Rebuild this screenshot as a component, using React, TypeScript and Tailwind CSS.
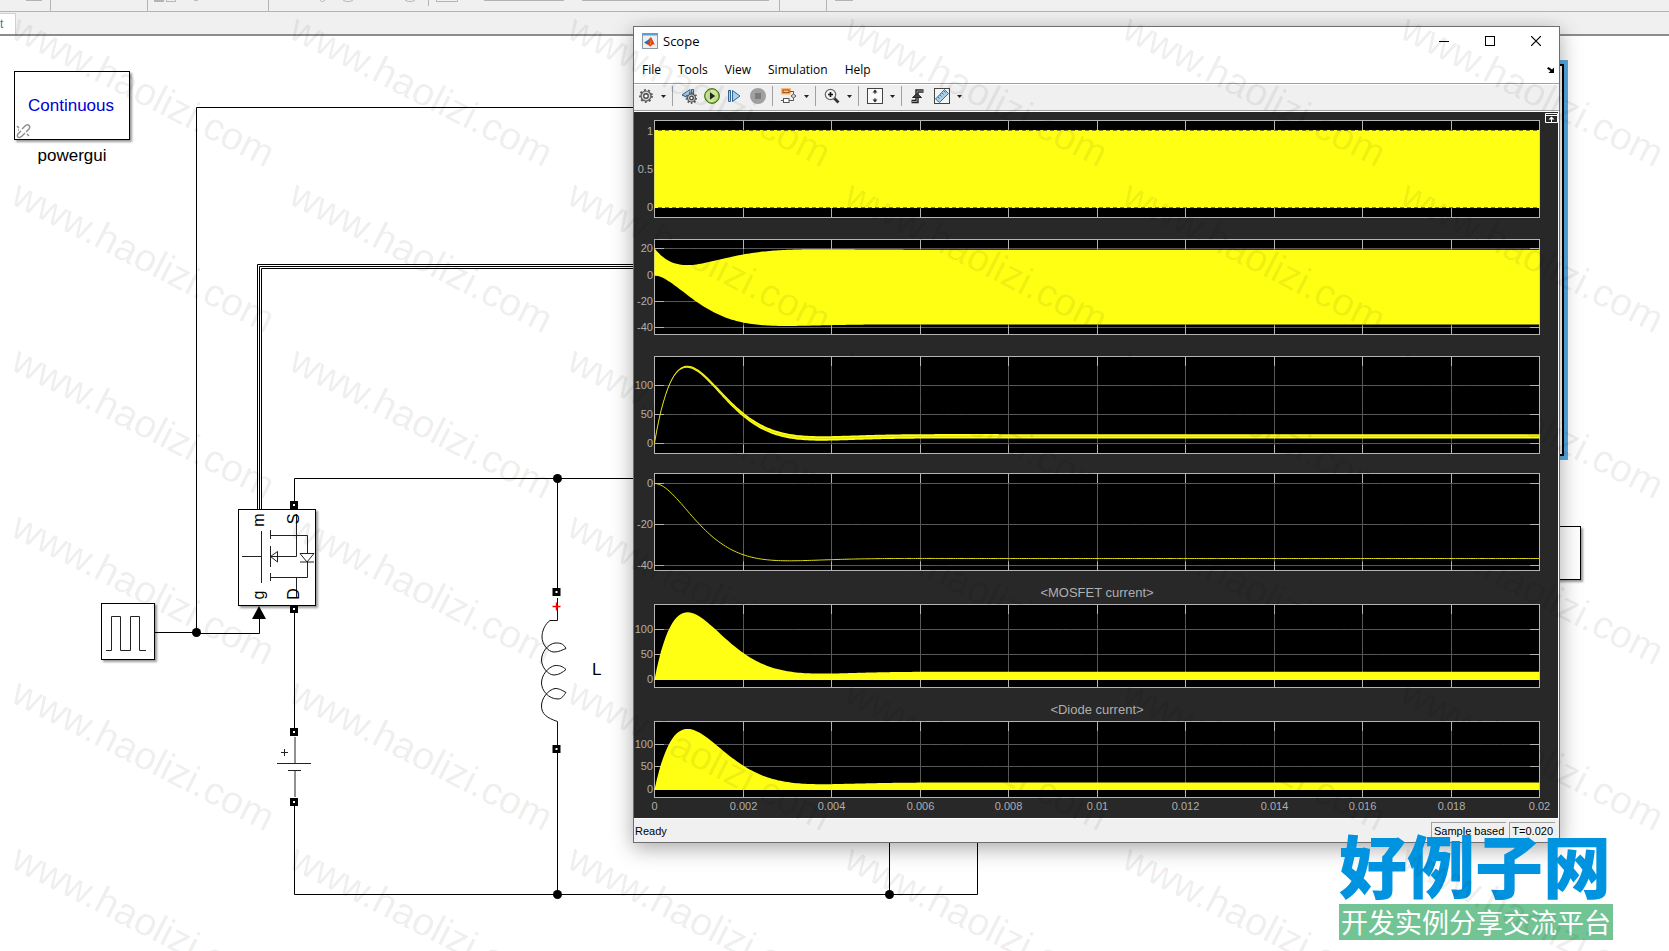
import type { ReactNode } from "react";

type Signal = (t: number) => number;

type Plot = {
  height: number;
  ticks: { y: number; label: string }[];
  // pixel row of value zero and pixels for one unit
  zero: number;
  scale: number;
  fill?: { top: Signal; bottom: Signal };
  line?: Signal;
  dashes?: number[];
  title?: string;
  gap: string;
};

// Step response of the converter, time in milliseconds
const DAMPING = 1.148;
const OMEGA = 1.03;

const settled: Signal = (t) =>
  1 - Math.exp(-DAMPING * t) * (Math.cos(OMEGA * t) + (DAMPING / OMEGA) * Math.sin(OMEGA * t));
const output: Signal = (t) => -36.6 * settled(t);
const inductor: Signal = (t) =>
  11.5 + Math.exp(-DAMPING * t) * (-11.5 * Math.cos(OMEGA * t) + 420 * Math.sin(OMEGA * t));
const ripple: Signal = (t) => 0.6 + 3.2 * settled(t);
const peakCurrent: Signal = (t) => Math.max(0, inductor(t) + 1 + 3.8 * settled(t));
const ground: Signal = () => 0;

const plots: Plot[] = [
  {
    height: 98, zero: 88, scale: 78, gap: "pt-2",
    ticks: [{ y: 11, label: "1" }, { y: 49, label: "0.5" }, { y: 87, label: "0" }],
    fill: { top: () => 1, bottom: ground },
    dashes: [10.5, 87.5],
  },
  {
    height: 96, zero: 36, scale: 1.314, gap: "pt-[21px]",
    ticks: [{ y: 9, label: "20" }, { y: 36, label: "0" }, { y: 62, label: "-20" }, { y: 88, label: "-40" }],
    fill: {
      top: (t) => 20.4 - 0.0975 * inductor(t),
      bottom: (t) => output(t) - 0.012 * inductor(t) - 0.9 * settled(t),
    },
  },
  {
    height: 98, zero: 87, scale: 0.578, gap: "pt-[21px]",
    ticks: [{ y: 29, label: "100" }, { y: 58, label: "50" }, { y: 87, label: "0" }],
    fill: { top: (t) => inductor(t) + ripple(t), bottom: (t) => inductor(t) - ripple(t) },
    line: inductor,
  },
  {
    height: 98, zero: 10.5, scale: 2.05, gap: "pt-[19px]",
    ticks: [{ y: 10, label: "0" }, { y: 51, label: "-20" }, { y: 92, label: "-40" }],
    line: output,
  },
  {
    height: 84, zero: 76, scale: 0.504, gap: "", title: "<MOSFET current>",
    ticks: [{ y: 25, label: "100" }, { y: 50, label: "50" }, { y: 75, label: "0" }],
    fill: { top: peakCurrent, bottom: ground },
  },
  {
    height: 77, zero: 69, scale: 0.455, gap: "", title: "<Diode current>",
    ticks: [{ y: 23, label: "100" }, { y: 45, label: "50" }, { y: 68, label: "0" }],
    fill: { top: peakCurrent, bottom: ground },
  },
];

const timeLabels = ["0", "0.002", "0.004", "0.006", "0.008", "0.01", "0.012", "0.014", "0.016", "0.018", "0.02"];
const gridX = timeLabels.map((_, i) => Math.round(20 + i * 88.5) + 0.5);
const samples = Array.from({ length: 401 }, (_, i) => i * 0.05);

function trace(signal: Signal, { zero, scale }: Plot) {
  return samples.map((t) => `${(20.5 + t * 44.25).toFixed(1)} ${(zero - signal(t) * scale).toFixed(2)}`);
}

function Axes({ plot, last }: { plot: Plot; last: boolean }) {
  const { height } = plot;
  const bottom = height - 0.5;
  return (
    <svg viewBox={`0 0 924 ${last ? height + 20 : height}`} className="block h-auto w-full">
      <rect x="20.5" y="0.5" width="885" height={height - 1} fill="#000" />
      {gridX.slice(1, -1).map((x) => (
        <path key={x} d={`M${x} 1V${bottom}`} stroke="#585858" />
      ))}
      {plot.ticks.map((tick) => (
        <path key={tick.label} d={`M21 ${tick.y + 0.5}H905`} stroke="#585858" />
      ))}
      {gridX.slice(1, -1).map((x) => (
        <path key={x} d={`M${x} 1v9M${x} ${bottom}v-9`} stroke="#b4b4b4" />
      ))}
      {plot.ticks.map((tick) => (
        <path key={tick.label} d={`M21 ${tick.y + 0.5}h9M905 ${tick.y + 0.5}h-9`} stroke="#b4b4b4" />
      ))}
      <rect x="20.5" y="0.5" width="885" height={height - 1} fill="none" stroke="#b4b4b4" />
      {plot.fill && (
        <path
          d={`M${[...trace(plot.fill.top, plot), ...trace(plot.fill.bottom, plot).reverse()].join("L")}Z`}
          fill="#ffff14"
        />
      )}
      {plot.line && <path d={`M${trace(plot.line, plot).join("L")}`} fill="none" stroke="#dcdc14" />}
      {plot.dashes?.map((y) => (
        <path key={y} d={`M24 ${y}H905`} stroke="#7d7d28" strokeDasharray="4 3" />
      ))}
      <g fill="#afafaf" fontSize="11" fontFamily="'Liberation Sans', Arial, sans-serif">
        {plot.ticks.map((tick) => (
          <text key={tick.label} x="19" y={tick.y + 4} textAnchor="end">
            {tick.label}
          </text>
        ))}
        {last &&
          timeLabels.map((label, i) => (
            <text key={label} x={gridX[i]} y={height + 12} textAnchor="middle">
              {label}
            </text>
          ))}
      </g>
    </svg>
  );
}

function Tool({ label, children }: { label: string; children: ReactNode }) {
  return (
    <button type="button" aria-label={label} className="size-4 shrink-0">
      <svg viewBox="0 0 16 16" className="size-4">
        {children}
      </svg>
    </button>
  );
}

function Caret({ label }: { label: string }) {
  return (
    <button type="button" aria-label={label} className="flex h-4 w-[18px] shrink-0 items-center justify-center">
      <svg viewBox="0 0 5 3" className="h-[3px] w-[5px]">
        <path d="M0 0h5L2.5 3z" fill="#222" />
      </svg>
    </button>
  );
}

function Separator() {
  return <span className="mr-2 h-5 w-px shrink-0 bg-[#a0a0a0]" />;
}

function Gear({ x, y, r }: { x: number; y: number; r: number }) {
  return (
    <g transform={`translate(${x} ${y})`}>
      <circle r={r + 1} fill="none" stroke="#555" strokeWidth="1.8" strokeDasharray={`${r * 0.37} ${r * 0.48}`} />
      <circle r={r} fill="#d8d8d8" stroke="#5a5a5a" strokeWidth="1.2" />
      <circle r={r * 0.45} fill="#fff" stroke="#444" strokeWidth="1.3" />
    </g>
  );
}

function Toolbar() {
  return (
    <div className="flex h-[27px] items-center border-t border-b border-t-white border-b-[#a0a0a0] bg-[#f0f0f0] pb-[3px] pl-1">
      <Tool label="Configuration properties">
        <Gear x={8} y={8} r={5} />
      </Tool>
      <Caret label="Configuration menu" />
      <Separator />
      <div className="mr-1.5 flex gap-[7px]">
        <Tool label="Stepping options">
          <path d="M1 7 9 1.5v9zM10.5 1.5h2V7h-2z" fill="#a9cbe8" stroke="#34658f" />
          <Gear x={10.5} y={10} r={4} />
        </Tool>
        <Tool label="Run">
          <circle cx="8" cy="8" r="7.4" fill="#8fc63f" stroke="#4b6b22" />
          <circle cx="8" cy="8" r="5.6" fill="#cbe894" stroke="#e6f4c8" strokeWidth="0.8" />
          <path d="M6 4.2v7.6L11.2 8z" fill="#222" />
        </Tool>
        <Tool label="Step forward">
          <path d="M1.5 2.5h2v11h-2zM5.5 2.5 13 8l-7.5 5.5z" fill="#a9cfee" stroke="#34658f" />
        </Tool>
        <Tool label="Stop">
          <circle cx="8" cy="8" r="8" fill="#a0a0a0" />
          <rect x="5" y="5" width="6" height="6" fill="#7c7c7c" />
        </Tool>
      </div>
      <Separator />
      <Tool label="Highlight block">
        <rect x="0.8" y="0.8" width="8.4" height="5" fill="#f58a35" stroke="#f7b877" strokeWidth="1.4" />
        <rect x="2" y="2" width="6" height="2.6" fill="#ffc48a" stroke="#a84a0c" />
        <path d="M9 3.5h3.5v3M8 12.5h4.5v-3M0 12.5h2" fill="none" stroke="#555" />
        <rect x="2.5" y="10.5" width="5.5" height="4" fill="#fff" stroke="#555" />
        <path d="m12.5 6 2.5 2-2.5 2L10 8z" fill="#ddd" stroke="#555" />
      </Tool>
      <Caret label="Highlight menu" />
      <Separator />
      <Tool label="Zoom">
        <path d="m10 10 4.5 4.5" stroke="#333" strokeWidth="2.8" />
        <circle cx="6.5" cy="6.5" r="5.2" fill="#eef4fa" stroke="#666" strokeWidth="1.2" />
        <path d="M6.5 4v5M4 6.5h5" stroke="#111" strokeWidth="1.6" />
      </Tool>
      <Caret label="Zoom menu" />
      <Separator />
      <Tool label="Scale axes limits">
        <rect x="0.5" y="0.5" width="15" height="15" fill="#fafafa" stroke="#444" />
        <path d="M8 2v4M8 10v4" stroke="#333" />
        <path d="M5.5 4.5 8 1.5l2.5 3zM5.5 11.5l2.5 3 2.5-3z" fill="#333" />
      </Tool>
      <Caret label="Scale menu" />
      <Separator />
      <div className="flex gap-2">
        <Tool label="Triggers">
          <path d="M1.5 13.5H7V3h6.5" fill="none" stroke="#222" strokeWidth="3.4" />
          <path d="M1.5 13.5H7V3h6.5" fill="none" stroke="#999" />
          <path d="M2.5 9.5 7 5.5l4.5 4z" fill="#444" stroke="#222" />
        </Tool>
        <Tool label="Cursor measurements">
          <rect x="0.5" y="0.5" width="15" height="15" fill="#f5f5f5" stroke="#444" />
          <path d="m1.5 11 9-9.5 4 4-9 9z" fill="#a6d0ea" stroke="#3f6f90" />
          <path d="m4 9 1.5 1.5M6 7l1.5 1.5M8 5l1.5 1.5M10 3l1.5 1.5" stroke="#2f5875" strokeWidth="0.8" />
        </Tool>
      </div>
      <Caret label="Measurements menu" />
    </div>
  );
}

function ScopeWindow() {
  return (
    <section className="absolute top-[26px] left-[633px] w-[927px] border border-[#6e6e6e] bg-[#f0f0f0] shadow-[0_5px_20px_rgba(0,0,0,0.35)]">
      <header className="flex h-[30px] items-center bg-white pb-[2px] pl-2">
        <svg viewBox="0 0 16 16" className="size-4">
          <rect x="0.5" y="0.5" width="15" height="15" fill="#eef1f4" stroke="#8d9aa5" />
          <path d="M0 0h16v2.5H0z" fill="#5c9fd2" />
          <path d="M2 9.5 6 7l2.5-2.5L7 10l-2 1.5z" fill="#2c6fb3" />
          <path d="M5 11.5 8.7 4c1 0 2.5 5 4.8 8.5-1.5-1.5-2.5-1.5-3.5-.5s-1.5 1.5-2 1.5-1.5-2-3-2z" fill="#d8421a" />
          <path d="M8.7 4c.3 2 .3 5-1.2 8.5l1-.5c1-2 1.200-5 .2-8z" fill="#f6a52c" />
        </svg>
        <h1 className="ml-[5px] flex-1 font-['Open_Sans',sans-serif] text-[13px] leading-4">Scope</h1>
        <button type="button" aria-label="Minimize" className="flex h-full w-[46px] items-center justify-center">
          <svg viewBox="0 0 10 10" className="size-[10px]">
            <path d="M0 5.5h10" stroke="#000" />
          </svg>
        </button>
        <button type="button" aria-label="Maximize" className="flex h-full w-[46px] items-center justify-center">
          <svg viewBox="0 0 10 10" className="size-[10px]">
            <rect x="0.5" y="0.5" width="9" height="9" fill="none" stroke="#000" />
          </svg>
        </button>
        <button type="button" aria-label="Close" className="flex h-full w-[46px] items-center justify-center">
          <svg viewBox="0 0 10 10" className="size-[10px]">
            <path d="m0 0 10 10M10 0 0 10" stroke="#000" strokeWidth="1.2" />
          </svg>
        </button>
      </header>
      <nav className="flex h-[27px] items-center gap-[17px] border-b border-[#a0a0a0] bg-white pr-1 pl-2 font-['Open_Sans',sans-serif] text-xs">
        {["File", "Tools", "View", "Simulation", "Help"].map((item) => (
          <button key={item} type="button">
            {item}
          </button>
        ))}
        <button type="button" aria-label="Dock" className="ml-auto">
          <svg viewBox="0 0 8 6" className="h-[6px] w-2">
            <path d="M0 1.5 1.5 0 5 2.5 7 .5V6H1.5l2-2z" fill="#000" />
          </svg>
        </button>
      </nav>
      <Toolbar />
      <div className="relative border-t border-r border-white bg-[#282828]">
        {plots.map((plot, i) => (
          <div key={i} className={plot.gap}>
            {plot.title && (
              <h2 className="h-[33px] pt-[14px] pl-[2px] text-center text-[13px] leading-4 text-[#afafaf]">
                {plot.title}
              </h2>
            )}
            <Axes plot={plot} last={i === plots.length - 1} />
          </div>
        ))}
        <button type="button" aria-label="Maximize axes" className="absolute top-px right-0">
          <svg viewBox="0 0 13 10" className="h-[10px] w-[13px]">
            <path d="M.5.5h12v9H.5zM0 2.5h13M6.5 9V4" fill="none" stroke="#fff" />
            <path d="M3.5 6.5h6l-3-3z" fill="#fff" />
          </svg>
        </button>
      </div>
      <footer className="flex h-6 items-center gap-[3px] border-t border-white pr-1 pl-px text-[11px] leading-4">
        <span className="flex-1">Ready</span>
        <span className="border-t border-l border-[#a0a0a0] px-[2px]">Sample based</span>
        <span className="border-t border-l border-[#a0a0a0] px-[2px]">T=0.020</span>
      </footer>
    </section>
  );
}

function Port({ x, y }: { x: number; y: number }) {
  return <rect x={x - 2.5} y={y - 2.5} width="5" height="5" fill="#fff" stroke="#000" strokeWidth="3" />;
}

function Diagram() {
  return (
    <svg
      className="absolute inset-0 h-full w-full"
      fill="none"
      stroke="#000"
      fontFamily="'Liberation Sans', Arial, sans-serif"
      fontSize="17"
    >
      {/* wires */}
      <path d="M154 632.5H196.5V107.5H640M196.5 633.5H259.5V616" />
      <path d="M257.5 510V264.5H640M259.5 510V266.5H640M261.5 510V268.5H640" />
      <path d="M294.5 502V478.5H640M557.5 478.5V589M294.5 613V729M294.5 805V894.5H977.5V840M889.5 894.5V840M557.5 753V894.5" />
      <g fill="#000" stroke="none">
        <circle cx="196.5" cy="632.5" r="4.5" />
        <circle cx="557.5" cy="478.5" r="4.5" />
        <circle cx="557.5" cy="894.5" r="4.5" />
        <circle cx="889.5" cy="894.5" r="4.5" />
        <path d="M252 619h14l-7-13z" />
      </g>

      {/* block frames */}
      <g className="drop-shadow-[2px_2px_1px_rgba(0,0,0,0.4)]">
        <rect x="14.5" y="71.5" width="115" height="68" fill="#fff" />
        <rect x="101.5" y="603.5" width="53" height="56" fill="#fff" />
        <rect x="238.5" y="509.5" width="77" height="96" fill="#fff" />
        <rect x="1500.5" y="526.5" width="80" height="53" fill="#fff" />
      </g>

      {/* powergui */}
      <path
        d="m22 129 3-3c3-3 6 0 4 3l-3 3M21 131l-3 3c-2 3 1 5 4 2l3-3M17 126l2 2M27 134l2 2M18 130h1"
        stroke="#8c8c8c"
        strokeWidth="1.4"
      />
      <text x="71" y="111" textAnchor="middle" fill="#0000d2" stroke="none">
        Continuous
      </text>
      <text x="72" y="161" textAnchor="middle" fill="#000" stroke="none">
        powergui
      </text>

      {/* pulse generator */}
      <path d="M106 650.5H111.5V616.5H120.5V650.5H130.5V616.5H139.5V650.5H146" stroke="#222" />

      {/* mosfet */}
      <g stroke="#222">
        <path d="M242 556.5H261.5M261.5 531V583M270.5 530V539M270.5 546V567M270.5 573V581" />
        <path d="M270.5 535.5H307.5V577.5H270.5M296.5 514V556.5H270.5M296.5 577.5V597" />
        <path d="M270.5 556.5 277.5 551.5V562z" />
        <path d="M300 553.5H314L307 562z" fill="#fff" />
        <path d="M300 562H314" />
      </g>
      <g fill="#000" stroke="none" fontSize="16" textAnchor="middle">
        <text transform="translate(264 520) rotate(-90)">m</text>
        <text transform="translate(299 519) rotate(-90)">S</text>
        <text transform="translate(264 595) rotate(-90)">g</text>
        <text transform="translate(299 594) rotate(-90)">D</text>
      </g>
      <Port x={294} y={505} />
      <Port x={294} y={609} />

      {/* battery */}
      <path d="M295 737V763.5M277 763.5H311M288 770.5H301M295 771V797M281 752.5h7M284.5 749v7" stroke="#222" />
      <Port x={294} y={732} />
      <Port x={294} y={802} />

      {/* inductor */}
      <path
        d="M557.5 598V620.5H550C545 624 542 631 542 637 542 644 548 652 554 652 559 652 562 650 566 648.5 563 643 560 643 555 643 548 644 541.5 652 541.5 660 541.5 667 548 675 554 675 559 675 563 672 566 669.5 562 666 560 665.5 555 665.5 548 667 541.5 675 541.5 683 541.5 690 548 699 558 699 562 699 564 695 566 692.5 560 689 558 688.5 555 688.5 548 690 541.5 698 541.5 706 541.5 714 547 718 557.5 721.5V745"
        stroke="#111"
      />
      <path d="M552.5 606.5h8M556.5 602.5v8" stroke="#f00" strokeWidth="1.4" />
      <Port x={556.5} y={592} />
      <Port x={556.5} y={749} />
      <text x="592" y="675" fill="#000" stroke="none">
        L
      </text>

      {/* selected scope block */}
      <g stroke="none">
        <rect x="1500" y="60" width="68" height="400" fill="#58ace6" />
        <rect x="1500" y="64" width="64" height="392" fill="#000" />
        <rect x="1500" y="66" width="62" height="388" fill="#fff" />
      </g>
    </svg>
  );
}

function Ribbon() {
  return (
    <div className="relative bg-[#f0f0f0]">
      <svg className="block h-3 w-full" fill="none" stroke="#b4b4b4">
        <path d="M0 11.5H4000M50.5 0V11M147.5 0V11M268.5 0V11M428.5 0V6M779.5 0V11M826.5 0V11" />
        <path d="M26 .5H42M484 .5H564M582 .5H769M835 .5H853M166.5 0V1.5H175.5V0M436.5 0V1.5H457.5V0" />
        <path d="M343 0c2 2 8 2 10 0M405 0c2 2 8 2 10 0M320 0c1 2 4 2 5 0M194 0c1 1 3 1 4 0" />
        <rect x="154" y="0" width="10" height="2" fill="#b4b4b4" stroke="none" />
      </svg>
      <div className="flex h-6 items-end border-b-2 border-[#8c8c8c]">
        <span className="h-[21px] w-4 border-t border-r border-[#d0d0d0] bg-white text-xs leading-5 text-[#5a6a9a]">t</span>
      </div>
    </div>
  );
}

function Watermark() {
  const columns = [9, 287, 565, 842, 1120, 1398];
  const rows = [37, 203, 369, 535, 701, 867];
  return (
    <svg className="pointer-events-none absolute inset-0 h-full w-full" fill="#000" fillOpacity="0.08">
      {rows.map((y) =>
        columns.map((x) => (
          <text
            key={`${x}-${y}`}
            transform={`translate(${x} ${y}) rotate(27)`}
            fontSize="39"
            fontFamily="'Liberation Sans', Arial, sans-serif"
          >
            www.haolizi.com
          </text>
        )),
      )}
    </svg>
  );
}

export default function App() {
  return (
    <main className="relative min-h-screen overflow-hidden bg-white font-['Liberation_Sans',Arial,sans-serif] text-black">
      <Diagram />
      <Ribbon />
      <ScopeWindow />
      <div className="absolute right-[56px] bottom-[11px] font-['Noto_Sans_CJK_SC',sans-serif]">
        <p className="text-[68px] leading-[80px] font-black text-[#0094e0]">好例子网</p>
        <p className="bg-[#72c494] px-[2px] text-[27px] leading-9 text-white">开发实例分享交流平台</p>
      </div>
      <Watermark />
    </main>
  );
}
